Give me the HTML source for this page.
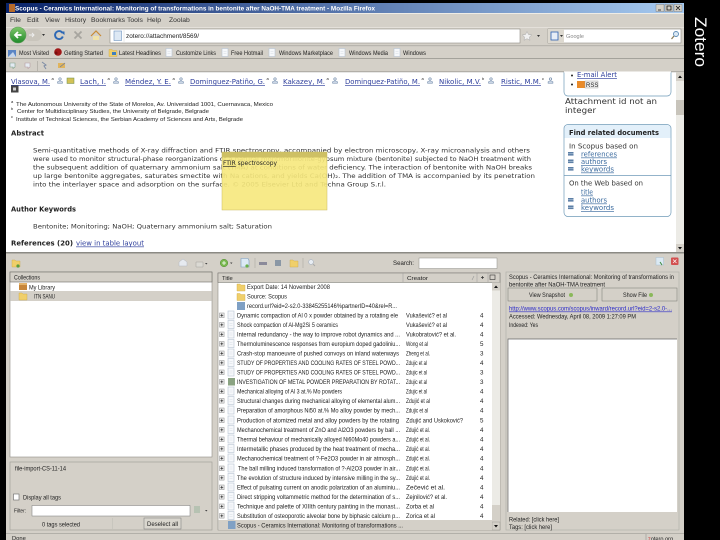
<!DOCTYPE html>
<html><head><meta charset="utf-8"><title>Zotero</title>
<style>
html,body{margin:0;padding:0;background:#000;width:720px;height:540px;overflow:hidden}
svg{display:block;filter:blur(.35px)}
text{font-family:"Liberation Sans",sans-serif;font-size:6.2px;fill:#222;white-space:pre}
.d{font-family:"DejaVu Sans",sans-serif;font-size:6.3px;fill:#333}
.a{font-family:"DejaVu Sans",sans-serif;font-size:6.6px;fill:#2f3f9c;text-decoration:underline}
.h{font-family:"DejaVu Sans",sans-serif;font-size:6.8px;font-weight:bold;fill:#222}
.l{font-family:"DejaVu Sans",sans-serif;font-size:6.6px;fill:#3a6a9e;text-decoration:underline}
.m{font-size:6.8px;fill:#333}
</style></head><body>
<svg width="720" height="540" viewBox="0 0 720 540" xmlns="http://www.w3.org/2000/svg">
<defs>
<linearGradient id="tb" x1="0" x2="1" y1="0" y2="0"><stop offset="0" stop-color="#0a246a"/><stop offset="1" stop-color="#a6caf0"/></linearGradient>
<linearGradient id="gr" x1="0" x2="0" y1="0" y2="1"><stop offset="0" stop-color="#7fc76a"/><stop offset="1" stop-color="#1f8a2a"/></linearGradient>
<g id="doc"><rect x="0" y="0" width="6" height="8" fill="#f6f8fb" stroke="#b7c3d2" stroke-width=".6"/><path d="M1.5 3h3M1.5 5h3" stroke="#d5dbe3" stroke-width=".5"/></g>
<g id="pl"><rect x="0" y="0" width="4.6" height="4.6" fill="#eee" stroke="#8a8a8a" stroke-width=".5"/><path d="M.9 2.3h2.8M2.3 .9v2.8" stroke="#222" stroke-width=".7"/></g>
<g id="pr"><circle cx="3" cy="2" r="1.2" fill="none" stroke="#6d87a8" stroke-width=".7"/><path d="M.6 6.2v-1.4q2.4-1.6 4.8 0v1.4z" fill="#d9e2ee" stroke="#6d87a8" stroke-width=".6"/></g>
<g id="ic"><rect x="0" y="0" width="5.5" height="3.6" fill="#5d7fa6"/><path d="M0 1.8h5.5" stroke="#cfe0ef" stroke-width=".5"/></g>
<g id="fo"><path d="M0 1h3l1 1h4v6H0z" fill="#f0cf6a" stroke="#cda748" stroke-width=".4"/></g>
</defs>
<rect width="720" height="540" fill="#000"/>
<rect x="6" y="3" width="678" height="537" fill="#d4d0c8"/>
<!-- title bar -->
<rect x="6" y="3" width="678" height="10" fill="url(#tb)"/>
<rect x="9" y="4" width="6" height="8" fill="#b66a2a"/>
<text x="15" y="10.5" textLength="360" lengthAdjust="spacingAndGlyphs" style="fill:#fff;font-weight:bold;font-size:6.6px">Scopus - Ceramics International: Monitoring of transformations in bentonite after NaOH-TMA treatment - Mozilla Firefox</text>
<g fill="#d4d0c8" stroke="#555" stroke-width=".3"><rect x="656" y="4.500" width="8" height="7"/><rect x="665" y="4.500" width="8" height="7"/><rect x="674" y="4.500" width="8" height="7"/></g>
<path d="M658 10h3M667 6h4v4h-4zM676 6l4 4M680 6l-4 4" stroke="#111" stroke-width=".8" fill="none"/>
<!-- menu -->
<rect x="6" y="13" width="678" height="1" fill="#eeece6"/>
<g class="mn">
<text class="m" x="10" y="22">File</text><text class="m" x="27" y="22">Edit</text><text class="m" x="45" y="22">View</text><text class="m" x="65" y="22">History</text><text class="m" x="91" y="22">Bookmarks</text><text class="m" x="127" y="22">Tools</text><text class="m" x="147" y="22">Help</text><text class="m" x="169" y="22">Zoolab</text>
</g>
<!-- nav -->
<rect x="6" y="27" width="678" height=".6" fill="#eeece6"/>
<rect x="24" y="29" width="18" height="12" rx="6" fill="#c9c5bc"/>
<circle cx="18" cy="35" r="8" fill="url(#gr)" stroke="#5f9a5a" stroke-width=".6"/>
<path d="M21.500 35h-6M18 32l-3 3 3 3" stroke="#fff" stroke-width="1.800" fill="none"/>
<path d="M29 35h5M32 33l2 2-2 2" stroke="#eee" stroke-width="1" fill="none"/>
<path d="M42 34h3l-1.500 2z" fill="#333"/>
<path d="M62.500 33a4 4 0 1 0 .3 3.500" stroke="#2d68b5" stroke-width="1.900" fill="none"/><path d="M60 31.500h4.500v3.500z" fill="#2d68b5"/>
<path d="M74.500 31.500l7 7M81.500 31.500l-7 7" stroke="#a7a59f" stroke-width="1.800"/>
<path d="M91 36l5-5 5 5" stroke="#c98a33" stroke-width="1.200" fill="none"/><rect x="93" y="36" width="6" height="4" fill="#f1e2a8"/>
<rect x="110" y="29" width="410" height="14" fill="#fff" stroke="#8f8e88" stroke-width=".6"/>
<rect x="114" y="31" width="7.500" height="9.500" fill="#dde8f4" stroke="#6e93bf" stroke-width=".6"/>
<path d="M124 30v12" stroke="#ccc" stroke-width=".4"/>
<text x="126" y="38" textLength="73" lengthAdjust="spacingAndGlyphs" style="font-size:6.4px">zotero://attachment/8569/</text>
<path d="M527 31.500l1.500 3 3.200.4-2.300 2.200.6 3.200-3-1.600-3 1.600.6-3.200-2.300-2.200 3.200-.4z" fill="#f0f0f0" stroke="#a9a9a9" stroke-width=".5"/>
<path d="M537 35h3l-1.500 2z" fill="#333"/>
<rect x="548" y="29" width="133" height="14" fill="#fff" stroke="#8f8e88" stroke-width=".6"/>
<rect x="548" y="29" width="16" height="14" fill="#ddd9d0"/>
<rect x="551" y="32" width="7" height="8" fill="#e7edf6" stroke="#2d5fb0" stroke-width=".8"/>
<path d="M560 35h3l-1.500 2z" fill="#333"/>
<text x="566" y="38" textLength="18" lengthAdjust="spacingAndGlyphs" style="fill:#888;font-size:5.6px">Google</text>
<circle cx="676" cy="34" r="2.500" fill="#dce9f4" stroke="#5d8cb5" stroke-width=".9"/><path d="M674 36l-2.500 3" stroke="#8a7a55" stroke-width="1.200"/>
<!-- bookmarks -->
<rect x="6" y="45.500" width="678" height=".6" fill="#9b9a94"/>
<path d="M8 50h8v7H8z" fill="#5b85c4"/><path d="M8 57l5-5 3 5z" fill="#c5d5ea"/>
<text x="19" y="55" textLength="30" lengthAdjust="spacingAndGlyphs">Most Visited</text>
<circle cx="58" cy="52" r="3.800" fill="#a01818"/><circle cx="56" cy="53" r="1.500" fill="#7a0d0d"/>
<text x="64" y="55" textLength="39" lengthAdjust="spacingAndGlyphs">Getting Started</text>
<use href="#fo" x="109" y="48.500"/><rect x="112" y="52" width="4" height="3" fill="#3f7fc0"/>
<text x="119" y="55" textLength="42" lengthAdjust="spacingAndGlyphs">Latest Headlines</text>
<use href="#doc" x="166" y="48.500"/><text x="176" y="55" textLength="40" lengthAdjust="spacingAndGlyphs">Customize Links</text>
<use href="#doc" x="222" y="48.500"/><text x="231" y="55" textLength="32" lengthAdjust="spacingAndGlyphs">Free Hotmail</text>
<use href="#doc" x="269" y="48.500"/><text x="279" y="55" textLength="54" lengthAdjust="spacingAndGlyphs">Windows Marketplace</text>
<use href="#doc" x="339" y="48.500"/><text x="349" y="55" textLength="39" lengthAdjust="spacingAndGlyphs">Windows Media</text>
<use href="#doc" x="394" y="48.500"/><text x="403" y="55" textLength="23" lengthAdjust="spacingAndGlyphs">Windows</text>
<rect x="6" y="58" width="678" height=".7" fill="#8f8e88"/>
<!-- zotero toolbar -->
<path d="M10 63h5v4l-2 1.500v-1.500h-3z" fill="#e3eaf2" stroke="#7fa08a" stroke-width=".6"/>
<path d="M25 63h5v4l-2 1.500v-1.500h-3z" fill="#e6ecf2" stroke="#b49aa0" stroke-width=".6"/>
<path d="M37.500 61v10" stroke="#a6a39b" stroke-width=".6"/>
<path d="M42 62l4 3-2 1 2 3" stroke="#7d8ca5" stroke-width="1" fill="none"/>
<rect x="58" y="63" width="7" height="5" fill="#e0b45d"/><path d="M60 67l5-4" stroke="#6c7ea3" stroke-width=".8"/>
<rect x="6" y="71.500" width="678" height=".7" fill="#8f8e88"/>
<!-- page -->
<rect x="6" y="72" width="670" height="180" fill="#fff"/>
<text class="a" x="11" y="84" textLength="39" lengthAdjust="spacingAndGlyphs">Vlasova, M.</text>
<text x="51.500" y="80" style="font-size:4px">a</text><use href="#pr" x="57" y="77"/><rect x="67" y="78" width="7" height="5.500" fill="#d2c256" stroke="#6a8a4f" stroke-width=".5"/>
<text class="a" x="80" y="84" textLength="26" lengthAdjust="spacingAndGlyphs">Lach, I.</text><text x="107.500" y="80" style="font-size:4px">a</text><use href="#pr" x="113" y="77"/>
<text class="a" x="125" y="84" textLength="46" lengthAdjust="spacingAndGlyphs">Méndez, Y. E.</text><text x="172.500" y="80" style="font-size:4px">a</text><use href="#pr" x="178" y="77"/>
<text class="a" x="190" y="84" textLength="75" lengthAdjust="spacingAndGlyphs">Dominguez-Patiño, G.</text><text x="266.500" y="80" style="font-size:4px">a</text><use href="#pr" x="272" y="77"/>
<text class="a" x="283" y="84" textLength="42" lengthAdjust="spacingAndGlyphs">Kakazey, M.</text><text x="326.500" y="80" style="font-size:4px">a</text><use href="#pr" x="332" y="77"/>
<text class="a" x="345" y="84" textLength="75" lengthAdjust="spacingAndGlyphs">Dominguez-Patiño, M.</text><text x="421.500" y="80" style="font-size:4px">a</text><use href="#pr" x="427" y="77"/>
<text class="a" x="439" y="84" textLength="42" lengthAdjust="spacingAndGlyphs">Nikolic, M.V.</text><text x="482" y="80" style="font-size:4px">b</text><use href="#pr" x="488" y="77"/>
<text class="a" x="501" y="84" textLength="40" lengthAdjust="spacingAndGlyphs">Ristic, M.M.</text><text x="542" y="80" style="font-size:4px">c</text><use href="#pr" x="547.500" y="77"/>
<rect x="11" y="85.500" width="7.500" height="7" fill="#444"/><path d="M13 87.500h3v3h-3z" fill="#ccc"/>
<text x="11" y="103" style="font-size:4px">a</text><text x="16" y="106" textLength="257" lengthAdjust="spacingAndGlyphs" style="font-size:5.700px">The Autonomous University of the State of Morelos, Av. Universidad 1001, Cuernavaca, Mexico</text>
<text x="11" y="110" style="font-size:4px">b</text><text x="17" y="113" textLength="192" lengthAdjust="spacingAndGlyphs" style="font-size:5.700px">Center for Multidisciplinary Studies, the University of Belgrade, Belgrade</text>
<text x="11" y="118" style="font-size:4px">c</text><text x="16" y="121" textLength="227" lengthAdjust="spacingAndGlyphs" style="font-size:5.700px">Institute of Technical Sciences, the Serbian Academy of Sciences and Arts, Belgrade</text>
<text class="h" x="11" y="135.500" textLength="33" lengthAdjust="spacingAndGlyphs">Abstract</text>
<text class="d" x="33" y="152.500" textLength="497" lengthAdjust="spacingAndGlyphs">Semi-quantitative methods of X-ray diffraction and FTIR spectroscopy, accompanied by electron microscopy, X-ray microanalysis and others</text>
<text class="d" x="33" y="161" textLength="498" lengthAdjust="spacingAndGlyphs">were used to monitor structural-phase reorganizations of a natural montmorillonite-gypsum mixture (bentonite) subjected to NaOH treatment with</text>
<text class="d" x="33" y="169.500" textLength="499" lengthAdjust="spacingAndGlyphs">the subsequent addition of quaternary ammonium salt (TMA) at conditions of water deficiency. The interaction of bentonite with NaOH breaks</text>
<text class="d" x="33" y="178" textLength="502" lengthAdjust="spacingAndGlyphs">up large bentonite aggregates, saturates smectite with Na cations, and yields Ca(OH)₂. The addition of TMA is accompanied by its penetration</text>
<text class="d" x="33" y="186.500" textLength="353" lengthAdjust="spacingAndGlyphs">into the interlayer space and adsorption on the surface. © 2005 Elsevier Ltd and Techna Group S.r.l.</text>
<text class="h" x="11" y="211.500" textLength="65" lengthAdjust="spacingAndGlyphs">Author Keywords</text>
<text class="d" x="33" y="228.500" textLength="239" lengthAdjust="spacingAndGlyphs">Bentonite; Monitoring; NaOH; Quaternary ammonium salt; Saturation</text>
<text class="h" x="11" y="245.500" textLength="62" lengthAdjust="spacingAndGlyphs">References (20)</text>
<text class="l" x="76" y="245.500" textLength="68" lengthAdjust="spacingAndGlyphs" style="fill:#2f3f9c">view in table layout</text>
<!-- sticky note -->
<rect x="222" y="152" width="105" height="58" fill="#f6e87c" fill-opacity=".9" stroke="#c9bd62" stroke-width=".5"/>
<rect x="222" y="152" width="105" height="5.500" fill="#c9bb60" fill-opacity=".9"/>
<text x="223" y="165" textLength="54" lengthAdjust="spacingAndGlyphs" style="font-family:'DejaVu Sans',sans-serif;font-size:6.4px;fill:#222"><tspan text-decoration="underline">FTIR</tspan> spectroscopy</text>
<!-- right boxes -->
<rect x="564" y="60" width="107" height="36" rx="4" fill="#fff" stroke="#6f9ab8" stroke-width=".7"/>
<rect x="6" y="58" width="678" height="14" fill="#d4d0c8"/><rect x="6" y="58" width="678" height=".7" fill="#8f8e88"/><rect x="6" y="71.500" width="678" height=".7" fill="#8f8e88"/>
<path d="M564 72h107" stroke="#fff" stroke-width="1"/>
<use href="#doc" x="0" y="-20"/>
<path d="M10 63h5v4l-2 1.500v-1.500h-3z" fill="#e3eaf2" stroke="#7fa08a" stroke-width=".6"/>
<path d="M25 63h5v4l-2 1.500v-1.500h-3z" fill="#e6ecf2" stroke="#b49aa0" stroke-width=".6"/>
<path d="M37.500 61v10" stroke="#a6a39b" stroke-width=".6"/>
<path d="M42 62l4 3-2 1 2 3" stroke="#7d8ca5" stroke-width="1" fill="none"/>
<rect x="58" y="63" width="7" height="5" fill="#e0b45d"/><path d="M60 67l5-4" stroke="#6c7ea3" stroke-width=".8"/>
<circle cx="572" cy="75.500" r="1" fill="#222"/><circle cx="572" cy="84.500" r="1" fill="#222"/>
<text class="l" x="577" y="77" textLength="40" lengthAdjust="spacingAndGlyphs" style="fill:#2f3f9c">E-mail Alert</text>
<rect x="577" y="81" width="8" height="7" fill="#e98b2a"/><rect x="585" y="81" width="13" height="7" fill="#eee" stroke="#999" stroke-width=".4"/>
<text x="586" y="87" style="font-size:6px">RSS</text>
<text class="d" x="565" y="104" textLength="92" lengthAdjust="spacingAndGlyphs" style="font-size:8px">Attachment id not an</text>
<text class="d" x="565" y="113" textLength="31" lengthAdjust="spacingAndGlyphs" style="font-size:8px">integer</text>
<rect x="564" y="124.500" width="107" height="92" rx="4" fill="#fff" stroke="#6f9ab8" stroke-width=".7"/>
<path d="M564.500 138v-9q0-4 4-4h98q4 0 4 4v9z" fill="#e3f0fa"/>
<text class="h" x="569" y="135" textLength="90" lengthAdjust="spacingAndGlyphs">Find related documents</text>
<text class="d" x="569" y="148.500" textLength="69" lengthAdjust="spacingAndGlyphs" style="font-size:6.800px">In Scopus based on</text>
<use href="#ic" x="568" y="152"/><text class="l" x="581" y="156.500" textLength="36" lengthAdjust="spacingAndGlyphs">references</text>
<use href="#ic" x="568" y="159.500"/><text class="l" x="581" y="164" textLength="26" lengthAdjust="spacingAndGlyphs">authors</text>
<use href="#ic" x="568" y="167"/><text class="l" x="581" y="171.500" textLength="33" lengthAdjust="spacingAndGlyphs">keywords</text>
<path d="M564 175.500h107" stroke="#6f9ab8" stroke-width=".7"/>
<text class="d" x="569" y="185.500" textLength="74" lengthAdjust="spacingAndGlyphs" style="font-size:6.800px">On the Web based on</text>
<text class="l" x="581" y="194.500" textLength="12" lengthAdjust="spacingAndGlyphs">title</text>
<use href="#ic" x="568" y="198"/><text class="l" x="581" y="202.500" textLength="26" lengthAdjust="spacingAndGlyphs">authors</text>
<use href="#ic" x="568" y="205.500"/><text class="l" x="581" y="210" textLength="33" lengthAdjust="spacingAndGlyphs">keywords</text>
<!-- page scrollbar -->
<rect x="676" y="72" width="8" height="180" fill="#ecebe6"/>
<rect x="676" y="72" width="8" height="9" fill="#d4d0c8"/><path d="M678 78h4l-2-2.500z" fill="#111"/>
<rect x="676" y="100" width="8" height="15" fill="#c8c4bb"/>
<rect x="676" y="244" width="8" height="8" fill="#d4d0c8"/><path d="M678 247h4l-2 2.500z" fill="#111"/>
<rect x="6" y="252" width="678" height="1.500" fill="#8b8a84"/>
<!-- zotero toolbar -->
<use href="#fo" x="12" y="259"/><circle cx="18" cy="266" r="1.600" fill="#5a9d3e"/>
<path d="M179 262l4-3 4 3v4h-8z" fill="#e6eaf0" stroke="#b3b7bf" stroke-width=".5"/>
<path d="M196 262h7v5h-7z" fill="#dbd9d3" stroke="#a3a29c" stroke-width=".5"/><path d="M205 263h2.500l-1.200 1.500z" fill="#444"/>
<circle cx="224" cy="263" r="3.800" fill="#78b84d" stroke="#558c38" stroke-width=".5"/><path d="M222 263h4M224 261v4" stroke="#fff" stroke-width=".8"/><path d="M230 262.500h2.500l-1.200 1.500z" fill="#444"/>
<path d="M241 258.500h7l1 2v6.500h-8z" fill="#dceaf5" stroke="#7a9bbd" stroke-width=".6"/><circle cx="247" cy="266" r="1.600" fill="#6ab04a"/>
<path d="M255 258v10" stroke="#a6a39b" stroke-width=".5"/>
<rect x="259" y="262" width="8" height="3" fill="#8b8a9a"/>
<rect x="275" y="260" width="6" height="6" fill="#8a97a5"/>
<use href="#fo" x="290" y="259"/>
<path d="M303 258v10" stroke="#a6a39b" stroke-width=".5"/>
<circle cx="311" cy="262" r="2.400" fill="#e8edf3" stroke="#a9b5c3" stroke-width=".6"/><path d="M313 264l2 2" stroke="#a9a9a9"/>
<text x="393" y="265" textLength="21" lengthAdjust="spacingAndGlyphs" style="font-size:6.200px">Search:</text>
<rect x="419" y="258" width="78" height="10.500" fill="#fff" stroke="#8f8e88" stroke-width=".5"/>
<rect x="656" y="257.500" width="7.500" height="7.500" fill="#dbe9f3" stroke="#a8c0d2" stroke-width=".5"/><path d="M660 262l2 3" stroke="#3d8a3a" stroke-width="1"/>
<rect x="671" y="257.500" width="7.500" height="7.500" rx="1" fill="#d25050"/><path d="M673 259.500l3.500 3.500M676.500 259.500l-3.500 3.500" stroke="#fff" stroke-width=".7"/>
<!-- collections -->
<rect x="10" y="272" width="202" height="185" fill="#fff" stroke="#8f8e88" stroke-width=".6"/>
<rect x="10" y="272" width="202" height="10" fill="#d4d0c8" stroke="#6d6c67" stroke-width=".6"/>
<text x="14" y="279.500" textLength="26" lengthAdjust="spacingAndGlyphs">Collections</text>
<rect x="19" y="283" width="8" height="7" fill="#c7863a"/><rect x="19" y="283" width="8" height="2" fill="#e4b36a"/>
<text x="29" y="289.500" textLength="26" lengthAdjust="spacingAndGlyphs">My Library</text>
<rect x="10.500" y="291" width="201" height="10" fill="#d4d0c8"/>
<use href="#fo" x="19" y="292"/>
<text x="34" y="298.500" textLength="21" lengthAdjust="spacingAndGlyphs">ITN SANU</text>
<!-- tags -->
<rect x="10" y="462" width="202" height="68" fill="#d4d0c8" stroke="#a4a29b" stroke-width=".7"/>
<text x="15" y="470.500" textLength="51" lengthAdjust="spacingAndGlyphs">file-import-CS-11-14</text>
<rect x="13.500" y="494" width="5.500" height="6" fill="#fff" stroke="#666" stroke-width=".6"/>
<text x="23" y="499.500" textLength="38" lengthAdjust="spacingAndGlyphs">Display all tags</text>
<text x="14" y="512.500" textLength="12" lengthAdjust="spacingAndGlyphs" style="font-size:5.600px">Filter:</text>
<rect x="32" y="505.500" width="158" height="10.500" fill="#fff" stroke="#777" stroke-width=".5"/>
<rect x="194" y="506" width="6" height="7" fill="#b6c2b2"/><path d="M205 510h2.500l-1.200 1.500z" fill="#444"/>
<text x="42" y="526.500" textLength="38" lengthAdjust="spacingAndGlyphs">0 tags selected</text>
<path d="M112.500 518v11" stroke="#bdbbb3" stroke-width=".5"/>
<rect x="144" y="518" width="37" height="11" fill="#d9d6ce" stroke="#777" stroke-width=".5"/>
<text x="147" y="526" textLength="31" lengthAdjust="spacingAndGlyphs">Deselect all</text>
<!-- list -->
<rect x="218" y="273" width="282" height="257" fill="#fff" stroke="#8f8e88" stroke-width=".6"/>
<rect x="218" y="273" width="282" height="9.500" fill="#d4d0c8" stroke="#6d6c67" stroke-width=".5"/>
<text x="222" y="279.800" style="font-size:5.800px">Title</text>
<text x="407" y="279.800" textLength="21" lengthAdjust="spacingAndGlyphs" style="font-size:5.800px">Creator</text>
<path d="M403 273v9M477 273v9M488 273v9" stroke="#999" stroke-width=".5"/>
<path d="M472 280l2-4" stroke="#999" stroke-width=".6"/><path d="M481 277.500h3M482.500 276v3" stroke="#333" stroke-width=".7"/><rect x="490" y="275" width="5" height="4.500" fill="none" stroke="#333" stroke-width=".6"/>
<rect x="492" y="282.500" width="8" height="247" fill="#ecebe6"/>
<rect x="492" y="282.500" width="8" height="8" fill="#d4d0c8"/><path d="M494 288h4l-2-2.500z" fill="#111"/>
<rect x="492" y="505" width="8" height="17" fill="#d4d0c8"/>
<rect x="492" y="522" width="8" height="8" fill="#d4d0c8" stroke="#8f8e88" stroke-width=".4"/><path d="M494 525h4l-2 2.500z" fill="#111"/>
<use href="#fo" x="237" y="283"/><text x="247" y="289" textLength="83" lengthAdjust="spacingAndGlyphs">Export Date: 14 November 2008</text>
<use href="#fo" x="237" y="292.500"/><text x="247" y="298.500" textLength="40" lengthAdjust="spacingAndGlyphs">Source: Scopus</text>
<rect x="237" y="302" width="8" height="8" fill="#7fa0c4"/><text x="247" y="308" textLength="150" lengthAdjust="spacingAndGlyphs">record.url?eid=2-s2.0-33845255146%partnerID=40&amp;rel=R...</text>
<use href="#pl" x="219.500" y="313"/><use href="#doc" x="228" y="311"/><text x="237" y="317.300" textLength="161" lengthAdjust="spacingAndGlyphs">Dynamic compaction of Al 0 x powder obtained by a rotating ele</text><text x="406" y="317.300" textLength="41" lengthAdjust="spacingAndGlyphs">Vukašević? et al</text><text x="480" y="317.300">4</text>
<use href="#pl" x="219.500" y="322.500"/><use href="#doc" x="228" y="320.500"/><text x="237" y="326.800" textLength="101" lengthAdjust="spacingAndGlyphs">Shock compaction of Al-Mg2Si 5 ceramics</text><text x="406" y="326.800" textLength="41" lengthAdjust="spacingAndGlyphs">Vukašević? et al</text><text x="480" y="326.800">4</text>
<use href="#pl" x="219.500" y="332"/><use href="#doc" x="228" y="330"/><text x="237" y="336.300" textLength="163" lengthAdjust="spacingAndGlyphs">Internal redundancy - the way to improve robot dynamics and ...</text><text x="406" y="336.300" textLength="50" lengthAdjust="spacingAndGlyphs">Vukobratović? et al.</text><text x="480" y="336.300">4</text>
<use href="#pl" x="219.500" y="341.500"/><use href="#doc" x="228" y="339.500"/><text x="237" y="345.800" textLength="163" lengthAdjust="spacingAndGlyphs">Thermoluminescence responses from europium doped gadoliniu...</text><text x="406" y="345.800" textLength="22" lengthAdjust="spacingAndGlyphs">Wong et al</text><text x="480" y="345.800">5</text>
<use href="#pl" x="219.500" y="351"/><use href="#doc" x="228" y="349"/><text x="237" y="355.300" textLength="162" lengthAdjust="spacingAndGlyphs">Crash-stop manoeuvre of pushed convoys on inland waterways</text><text x="406" y="355.300" textLength="24" lengthAdjust="spacingAndGlyphs">Zheng et al.</text><text x="480" y="355.300">3</text>
<use href="#pl" x="219.500" y="360.500"/><use href="#doc" x="228" y="358.500"/><text x="237" y="364.800" textLength="163" lengthAdjust="spacingAndGlyphs">STUDY OF PROPERTIES AND COOLING RATES OF STEEL POWD...</text><text x="406" y="364.800" textLength="21" lengthAdjust="spacingAndGlyphs">Zdujic et al</text><text x="480" y="364.800">4</text>
<use href="#pl" x="219.500" y="370"/><use href="#doc" x="228" y="368"/><text x="237" y="374.300" textLength="163" lengthAdjust="spacingAndGlyphs">STUDY OF PROPERTIES AND COOLING RATES OF STEEL POWD...</text><text x="406" y="374.300" textLength="21" lengthAdjust="spacingAndGlyphs">Zdujic et al</text><text x="480" y="374.300">3</text>
<use href="#pl" x="219.500" y="379.500"/><rect x="228" y="378" width="7" height="7.500" fill="#8aa382"/><text x="237" y="383.800" textLength="163" lengthAdjust="spacingAndGlyphs">INVESTIGATION OF METAL POWDER PREPARATION BY ROTAT...</text><text x="406" y="383.800" textLength="21" lengthAdjust="spacingAndGlyphs">Zdujic et al</text><text x="480" y="383.800">3</text>
<use href="#pl" x="219.500" y="389"/><use href="#doc" x="228" y="387"/><text x="237" y="393.300" textLength="105" lengthAdjust="spacingAndGlyphs">Mechanical alloying of Al 3 at.% Mo powders</text><text x="406" y="393.300" textLength="21" lengthAdjust="spacingAndGlyphs">Zdujic et al</text><text x="480" y="393.300">4</text>
<use href="#pl" x="219.500" y="398.500"/><use href="#doc" x="228" y="396.500"/><text x="237" y="402.800" textLength="163" lengthAdjust="spacingAndGlyphs">Structural changes during mechanical alloying of elemental alum...</text><text x="406" y="402.800" textLength="24" lengthAdjust="spacingAndGlyphs">Zdujić et al</text><text x="480" y="402.800">4</text>
<use href="#pl" x="219.500" y="408"/><use href="#doc" x="228" y="406"/><text x="237" y="412.300" textLength="163" lengthAdjust="spacingAndGlyphs">Preparation of amorphous Ni50 at.% Mo alloy powder by mech...</text><text x="406" y="412.300" textLength="22" lengthAdjust="spacingAndGlyphs">Zdujic et al</text><text x="480" y="412.300">4</text>
<use href="#pl" x="219.500" y="418"/><use href="#doc" x="228" y="416"/><text x="237" y="422.300" textLength="162" lengthAdjust="spacingAndGlyphs">Production of atomized metal and alloy powders by the rotating</text><text x="406" y="422.300" textLength="57" lengthAdjust="spacingAndGlyphs">Zdujić and Uskoković?</text><text x="480" y="422.300">5</text>
<use href="#pl" x="219.500" y="427.500"/><use href="#doc" x="228" y="425.500"/><text x="237" y="431.800" textLength="163" lengthAdjust="spacingAndGlyphs">Mechanochemical treatment of ZnO and Al2O3 powders by ball ...</text><text x="406" y="431.800" textLength="24" lengthAdjust="spacingAndGlyphs">Zdujić et al.</text><text x="480" y="431.800">4</text>
<use href="#pl" x="219.500" y="437"/><use href="#doc" x="228" y="435"/><text x="237" y="441.300" textLength="163" lengthAdjust="spacingAndGlyphs">Thermal behaviour of mechanically alloyed Ni60Mo40 powders a...</text><text x="406" y="441.300" textLength="24" lengthAdjust="spacingAndGlyphs">Zdujić et al.</text><text x="480" y="441.300">4</text>
<use href="#pl" x="219.500" y="446.500"/><use href="#doc" x="228" y="444.500"/><text x="237" y="450.800" textLength="163" lengthAdjust="spacingAndGlyphs">Intermetallic phases produced by the heat treatment of mecha...</text><text x="406" y="450.800" textLength="24" lengthAdjust="spacingAndGlyphs">Zdujić et al.</text><text x="480" y="450.800">4</text>
<use href="#pl" x="219.500" y="456"/><use href="#doc" x="228" y="454"/><text x="237" y="460.300" textLength="163" lengthAdjust="spacingAndGlyphs">Mechanochemical treatment of ?-Fe2O3 powder in air atmosph...</text><text x="406" y="460.300" textLength="24" lengthAdjust="spacingAndGlyphs">Zdujić et al.</text><text x="480" y="460.300">4</text>
<use href="#pl" x="219.500" y="466"/><use href="#doc" x="228" y="464"/><text x="238" y="470.300" textLength="162" lengthAdjust="spacingAndGlyphs">The ball milling induced transformation of ?-Al2O3 powder in air...</text><text x="406" y="470.300" textLength="24" lengthAdjust="spacingAndGlyphs">Zdujić et al.</text><text x="480" y="470.300">4</text>
<use href="#pl" x="219.500" y="475.500"/><use href="#doc" x="228" y="473.500"/><text x="237" y="479.800" textLength="163" lengthAdjust="spacingAndGlyphs">The evolution of structure induced by intensive milling in the sy...</text><text x="406" y="479.800" textLength="24" lengthAdjust="spacingAndGlyphs">Zdujić et al.</text><text x="480" y="479.800">4</text>
<use href="#pl" x="219.500" y="485"/><use href="#doc" x="228" y="483"/><text x="237" y="489.300" textLength="163" lengthAdjust="spacingAndGlyphs">Effect of pulsating current on anodic polarization of an aluminiu...</text><text x="406" y="489.300" textLength="39" lengthAdjust="spacingAndGlyphs">Zečević et al.</text><text x="480" y="489.300">4</text>
<use href="#pl" x="219.500" y="494.500"/><use href="#doc" x="228" y="492.500"/><text x="237" y="498.800" textLength="163" lengthAdjust="spacingAndGlyphs">Direct stripping voltammetric method for the determination of s...</text><text x="406" y="498.800" textLength="41" lengthAdjust="spacingAndGlyphs">Zejnilović? et al.</text><text x="480" y="498.800">4</text>
<use href="#pl" x="219.500" y="504"/><use href="#doc" x="228" y="502"/><text x="237" y="508.300" textLength="163" lengthAdjust="spacingAndGlyphs">Technique and palette of XIIIth century painting in the monast...</text><text x="406" y="508.300" textLength="28" lengthAdjust="spacingAndGlyphs">Zorba et al</text><text x="480" y="508.300">4</text>
<use href="#pl" x="219.500" y="513.500"/><use href="#doc" x="228" y="511.500"/><text x="237" y="517.800" textLength="163" lengthAdjust="spacingAndGlyphs">Substitution of osteoporotic alveolar bone by biphasic calcium p...</text><text x="406" y="517.800" textLength="29" lengthAdjust="spacingAndGlyphs">Zorica et al</text><text x="480" y="517.800">4</text>
<rect x="218.500" y="520" width="273.500" height="10" fill="#d4d0c8"/>
<rect x="228" y="521" width="7.500" height="8" fill="#7fa0c4"/>
<text x="237" y="527.300" textLength="166" lengthAdjust="spacingAndGlyphs">Scopus - Ceramics International: Monitoring of transformations ...</text>
<!-- right pane -->
<rect x="506" y="272" width="173" height="258" fill="#d4d0c8" stroke="#b4b2aa" stroke-width=".7"/>
<text x="509" y="279" textLength="165" lengthAdjust="spacingAndGlyphs">Scopus - Ceramics International: Monitoring of transformations in</text>
<text x="509" y="286.500" textLength="96" lengthAdjust="spacingAndGlyphs">bentonite after NaOH-TMA treatment</text>
<rect x="508" y="288" width="89" height="13" fill="#d4d0c8" stroke="#77766f" stroke-width=".5"/>
<text x="529" y="297" textLength="36" lengthAdjust="spacingAndGlyphs">View Snapshot</text><circle cx="571" cy="295" r="2" fill="#8ab85a"/>
<rect x="602" y="288" width="75" height="13" fill="#d4d0c8" stroke="#77766f" stroke-width=".5"/>
<text x="623" y="297" textLength="24" lengthAdjust="spacingAndGlyphs">Show File</text><circle cx="651" cy="295" r="2" fill="#8ab85a"/>
<text x="509" y="310.500" textLength="163" lengthAdjust="spacingAndGlyphs" style="fill:#2a2ac8;text-decoration:underline">http://www.scopus.com/scopus/inward/record.url?eid=2-s2.0-...</text>
<text x="509" y="318.500" textLength="127" lengthAdjust="spacingAndGlyphs">Accessed: Wednesday, April 08, 2009 1:27:09 PM</text>
<text x="509" y="327" textLength="29" lengthAdjust="spacingAndGlyphs">Indexed: Yes</text>
<rect x="508" y="339" width="169" height="173" fill="#fff"/><path d="M508 512V339h169" fill="none" stroke="#666" stroke-width=".7"/>
<text x="509" y="521.500" textLength="50" lengthAdjust="spacingAndGlyphs">Related: [click here]</text>
<text x="509" y="529" textLength="43" lengthAdjust="spacingAndGlyphs">Tags: [click here]</text>
<!-- status -->
<rect x="6" y="533" width="678" height=".6" fill="#9b9a94"/>
<text x="12" y="540" style="font-size:5.800px">Done</text>
<path d="M646 534v6" stroke="#888" stroke-width=".5"/>
<text x="648" y="541" textLength="25" lengthAdjust="spacingAndGlyphs" style="font-size:6px"><tspan style="fill:#c33">z</tspan>otero.org</text>
<rect x="0" y="0" width="6" height="540" fill="#000"/>
<text x="0" y="0" transform="translate(695 17) rotate(90)" textLength="50" lengthAdjust="spacingAndGlyphs" style="fill:#fff;font-size:17px">Zotero</text>
</svg>
</body></html>
